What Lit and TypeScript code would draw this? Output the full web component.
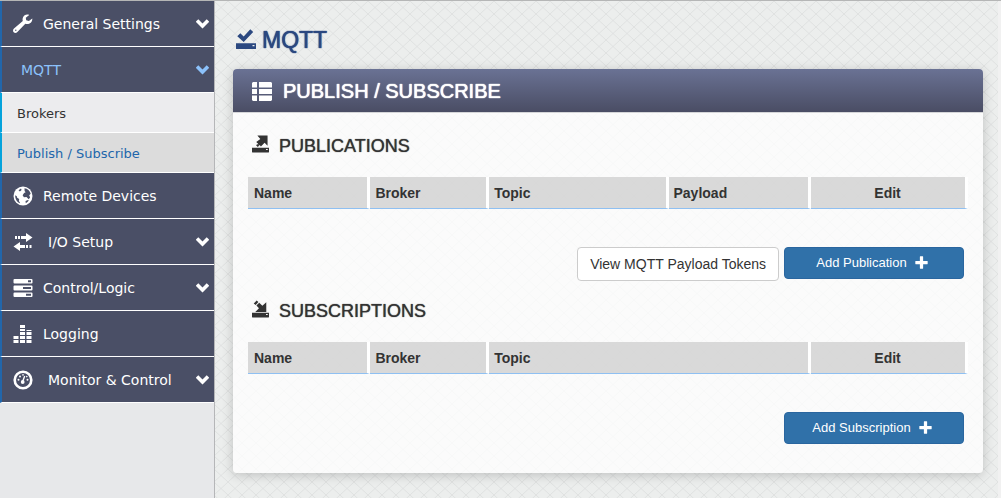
import { LitElement, html, css, svg, nothing } from "lit";
import { customElement, property } from "lit/decorators.js";

const icons: Record<string, unknown> = {
  wrench: svg`<path fill="currentColor" d="M19.300 4.600 15.900 7 13.200 6.300 12.800 3.800 16.200.9C13.600-.2 10 1.400 9.600 4.800c-.1.8 0 1.500.2 2.200L1 14.600c-1.200 1.100-1.300 2.700-.3 3.700 1 1 2.600.9 3.700-.3l7.900-8.300c3.600 1.100 7.200-1.300 7-5.100z"/><circle cx="2.800" cy="16.300" r=".7" fill="#4a4f66"/>`,
  chevron: svg`<path d="M1 3.500 6.500 9 12 3.500" fill="none" stroke="currentColor" stroke-width="3.600"/>`,
  globe: svg`<circle cx="10" cy="10" r="9.500" fill="currentColor"/><path fill="#4a4f66" d="M11.500 2.200c3 .4 5.500 2.600 6.200 5.600l-1.500 1.500.9 2.300-1.400 1.600-2.200-2.300-2.600.3-1.300-2 1.500-2.300 1.500-.6-1-1.400zM2.200 9.200l1.600 1 .4 1.500 2 1.400-.3 2 1.300 2.200C4.300 16.300 2 13.200 2.200 9.200zM5.500 4.200 8 2.500l.6 1.400-1.700 1.700zM12.500 15l2.500-1 .8.600c-.8 1.200-1.800 2-3 2.600z"/>`,
  transfer: svg`<g fill="currentColor"><path d="M8 4h5V1l6.500 4.500L13 10V7H8zM5 4h2v3H5zM2 4h2v3H2zM12 13H7v-3L.5 14.500 7 19v-3h5zM13 13h2v3h-2zM16.500 13h2v3h-2z"/></g>`,
  tasks: svg`<path fill="currentColor" fill-rule="evenodd" d="M1.500 1h17q1 0 1 1v2.500q0 1-1 1h-17q-1 0-1-1V2q0-1 1-1zM15 2.300v2h3v-2zM1.500 7.500h17q1 0 1 1v3q0 1-1 1h-17q-1 0-1-1v-3q0-1 1-1zM10 9v2h8V9zM1.500 14.500h17q1 0 1 1V18q0 1-1 1h-17q-1 0-1-1v-2.500q0-1 1-1zM13 15.700v2h5v-2z"/>`,
  bars: svg`<path fill="currentColor" d="M.5 16h5v3h-5zM.5 12h5v3h-5zM7 16h5v3H7zM7 12h5v3H7zM7 8h5v3H7zM7 5h5v2H7zM7 1h5v3H7zM13.500 16h5v3h-5zM13.500 12h5v3h-5zM13.500 8h5v3h-5zM13.500 6h5v1h-5z"/>`,
  gauge: svg`<circle cx="10" cy="10" r="8.300" fill="none" stroke="currentColor" stroke-width="2.600"/><path d="m9.500 12 2.200-6" stroke="currentColor" stroke-width="1.300"/><g fill="currentColor"><circle cx="9.700" cy="12" r="1.900"/><circle cx="5.500" cy="9.700" r="1"/><circle cx="7" cy="6.500" r="1"/><circle cx="14.500" cy="9.700" r="1"/><circle cx="13.800" cy="6.600" r=".8"/><circle cx="10" cy="4.900" r=".8"/></g>`,
  saved: svg`<path fill="currentColor" fill-rule="evenodd" d="M1.300 7.200 4.300 4.200 7.700 7.400 14.300.2 17.200 3 7.700 13zM0 14.300h20v5.200q0 .5-.5.500H.5Q0 20 0 19.500zM16.500 16v1.200h2V16z"/>`,
  list: svg`<path fill="currentColor" d="M1 0h4v5.500H0V1zM7 0h12l1 1v4.500H7zM0 7h5v5H0zM7 7h13v5H7zM0 13.500h5V19H1l-1-1zM7 13.500h13V18l-1 1H7z"/>`,
  open: svg`<path fill="currentColor" fill-rule="evenodd" d="M6.300 0h12v12l-3.500-3.500-4.300 4.300-1.500-1.500-2.200 2.200-2-2 2-2L4.600 8 9.800 4zM0 14.500h20v5q0 .5-.5.500H.5Q0 20 0 19.500zM16.500 16v1.200h2V16z"/><path d="m4.500 7.800 2.800 2.800" stroke="#fafafa" stroke-width="1"/>`,
  save: svg`<path fill="currentColor" fill-rule="evenodd" d="m2 3.500 3.500-3.500 2 1.800-3.200 3.500zM5.200 6l3.300-3.300 3.700 3.500 4.600-4.200V13.500H3.800L8.200 9zM0 14.500h20v5q0 .5-.5.500H.5Q0 20 0 19.500zM16.500 16v1.200h2V16z"/>`,
  plus: svg`<path fill="currentColor" d="M7.500 1q0-.5.500-.5h4q.5 0 .5.500V7.500H19q.5 0 .5.500v4q0 .5-.5.500h-6.500V19q0 .5-.5.500H8q-.5 0-.5-.5v-6.500H1Q.5 12.500.5 12V8Q.5 7.500 1 7.500h6.500z"/>`,
};

const icon = (name: string, cls: string) => html`
  <svg class=${cls} viewBox=${name === "chevron" ? "0 0 13 13" : "0 0 20 20"} aria-hidden="true">${icons[name]}</svg>`;

interface MenuItem {
  label: string;
  icon?: string;
  open?: boolean;
  menu?: boolean;
  wide?: boolean;
  children?: { label: string; current?: boolean }[];
}

const menu: MenuItem[] = [
  { label: "General Settings", icon: "wrench", menu: true },
  {
    label: "MQTT",
    open: true,
    menu: true,
    children: [{ label: "Brokers" }, { label: "Publish / Subscribe", current: true }],
  },
  { label: "Remote Devices", icon: "globe" },
  { label: "I/O Setup", icon: "transfer", menu: true, wide: true },
  { label: "Control/Logic", icon: "tasks", menu: true },
  { label: "Logging", icon: "bars" },
  { label: "Monitor & Control", icon: "gauge", menu: true, wide: true },
];

@customElement("side-menu")
export class SideMenu extends LitElement {
  static styles = css`
    :host {
      display: block;
      background: #e7e8ea;
      border-right: 1px solid #b5b6b8;
      font-family: Verdana, "DejaVu Sans", sans-serif;
      font-size: 14px;
    }
    ul { list-style: none; margin: 0; padding: 0; }
    a { color: inherit; text-decoration: none; }
    .item {
      display: flex;
      align-items: center;
      height: 45px;
      padding: 0 5px 0 11px;
      color: #fff;
      background: #4a4f66;
      border-left: 2px solid #2166ab;
      border-bottom: 1px solid #fff;
    }
    .item.open { color: #8cc2fb; padding-left: 19px; }
    .glyph { width: 20px; height: 20px; margin-right: 10px; }
    .item.wide .glyph { margin-right: 15px; }
    .label { flex: 1; white-space: nowrap; }
    .chevron { width: 13px; height: 13px; }
    .sub {
      display: flex;
      align-items: center;
      box-sizing: border-box;
      height: 40px;
      padding: 2px 0 0 15px;
      font-size: 13px;
      color: #333;
      background: #ececee;
      border-left: 2px solid #05a3dc;
      border-bottom: 1px solid #fff;
    }
    .sub.current { color: #2166ab; background: #dcdcdc; }
  `;

  render() {
    return html`<nav><ul>${menu.map((m) => html`
      <li>
        <a href="#" class="item ${m.open ? "open" : ""} ${m.wide ? "wide" : ""}">
          ${m.icon ? icon(m.icon, "glyph") : nothing}
          <span class="label">${m.label}</span>
          ${m.menu ? icon("chevron", "chevron") : nothing}
        </a>
        ${m.children
          ? html`<ul>${m.children.map((c) => html`
              <li><a href="#" class="sub ${c.current ? "current" : ""}">${c.label}</a></li>`)}</ul>`
          : nothing}
      </li>`)}</ul></nav>`;
  }
}

@customElement("topic-table")
export class TopicTable extends LitElement {
  @property() heading = "";
  @property() glyph = "";
  @property({ type: Boolean }) payload = false;

  static styles = css`
    :host { display: block; }
    h3 {
      display: flex;
      align-items: center;
      gap: 10px;
      margin: 0;
      padding-left: 4px;
      height: 24px;
      font-size: 18px;
      line-height: 24px;
      font-weight: 400;
      text-shadow: 0 0 1px #333;
    }
    .glyph { width: 17px; height: 18px; margin-bottom: 4px; }
    table {
      width: 100%;
      margin-top: 19px;
      table-layout: fixed;
      border-collapse: separate;
      border-spacing: 0;
    }
    th {
      height: 31px;
      box-sizing: content-box;
      padding: 0 6px;
      text-align: left;
      font-size: 14px;
      background: rgba(205, 205, 205, 0.75);
      background-clip: padding-box;
      border-right: 3px solid #fff;
      border-bottom: 1px solid #8fc0f2;
    }
    th + th { padding-left: 5px; }
    .edit { text-align: center; }
    .name { width: 17%; }
    .broker { width: 16.5%; }
    .body { width: 19.8%; }
    .last { width: 21.8%; }
  `;

  render() {
    return html`
      <h3>${icon(this.glyph, "glyph")}${this.heading}</h3>
      <table>
        <colgroup>
          <col class="name" /><col class="broker" /><col />
          ${this.payload ? html`<col class="body" />` : nothing}
          <col class="last" />
        </colgroup>
        <thead>
          <tr>
            <th scope="col">Name</th>
            <th scope="col">Broker</th>
            <th scope="col">Topic</th>
            ${this.payload ? html`<th scope="col">Payload</th>` : nothing}
            <th scope="col" class="edit">Edit</th>
          </tr>
        </thead>
      </table>`;
  }
}

@customElement("app-root")
export class AppRoot extends LitElement {
  static styles = css`
    :host {
      --lattice: url("data:image/svg+xml,%3Csvg xmlns='http://www.w3.org/2000/svg' width='14' height='13'%3E%3Cpath d='M0 0 14 13M14 0 0 13' stroke='%23dcdedd' stroke-width='.8'/%3E%3C/svg%3E");
      display: grid;
      grid-template-columns: 215px 1fr;
      min-height: 100vh;
      box-sizing: border-box;
      border-top: 1px solid #b5b6b6;
      font-family: "Helvetica Neue", "Liberation Sans", Arial, sans-serif;
      font-size: 14px;
      color: #333;
    }
    main {
      padding: 25px 15px 24px 18px;
      border-right: 3px solid #f1f1f1;
      background: var(--lattice) -1px 0 #eceeed;
    }
    h1 {
      display: flex;
      align-items: center;
      gap: 6px;
      margin: 0 0 14px;
      padding-left: 3px;
      height: 29px;
      font-size: 23px;
      font-weight: 400;
      color: #2b4880;
      text-shadow: 0 0 1px #2b4880, 0 0 1px #2b4880;
    }
    .mark { width: 20px; height: 20px; margin-bottom: 3px; }
    .panel {
      border-radius: 4px;
      background: rgba(255, 255, 255, 0.76);
      box-shadow: 0 2px 12px rgba(0, 0, 0, 0.2);
    }
    h2 {
      display: flex;
      align-items: center;
      gap: 11px;
      box-sizing: border-box;
      margin: 0;
      padding: 2px 0 0 19px;
      height: 44px;
      font-size: 20px;
      font-weight: 400;
      color: #fff;
      text-shadow: 0 0 1px #fff, 0 0 1px #fff;
      background: linear-gradient(#6a7294, #4a4d64);
      border-bottom: 1px solid #d5d6d8;
      border-radius: 4px 4px 0 0;
    }
    .list { width: 20px; height: 20px; }
    .content { padding: 21px 15px 29px; }
    .actions {
      display: flex;
      justify-content: flex-end;
      align-items: flex-start;
      gap: 5px;
      margin: 38px 4px 0 0;
    }
    .actions.first { height: 52px; }
    button {
      display: flex;
      align-items: center;
      justify-content: center;
      box-sizing: border-box;
      margin: 0;
      font-family: inherit;
      border-radius: 4px;
      white-space: nowrap;
    }
    .plain {
      height: 34px;
      padding: 0 12px;
      font-size: 14px;
      color: #333;
      background: #fff;
      border: 1px solid #ccc;
    }
    .primary {
      gap: 8px;
      width: 180px;
      height: 32px;
      padding: 0 4px 2px 0;
      font-size: 13px;
      color: #fff;
      background: #3071a9;
      border: 1px solid #2a669f;
    }
    .plus { width: 13px; height: 13px; }
  `;

  render() {
    return html`
      <side-menu></side-menu>
      <main>
        <h1>${icon("saved", "mark")}MQTT</h1>
        <section class="panel">
          <h2>${icon("list", "list")}PUBLISH / SUBSCRIBE</h2>
          <div class="content">
            <topic-table heading="PUBLICATIONS" glyph="open" payload></topic-table>
            <div class="actions first">
              <button type="button" class="plain">View MQTT Payload Tokens</button>
              <button type="button" class="primary">Add Publication ${icon("plus", "plus")}</button>
            </div>
            <topic-table heading="SUBSCRIPTIONS" glyph="save"></topic-table>
            <div class="actions">
              <button type="button" class="primary">Add Subscription ${icon("plus", "plus")}</button>
            </div>
          </div>
        </section>
      </main>`;
  }
}
